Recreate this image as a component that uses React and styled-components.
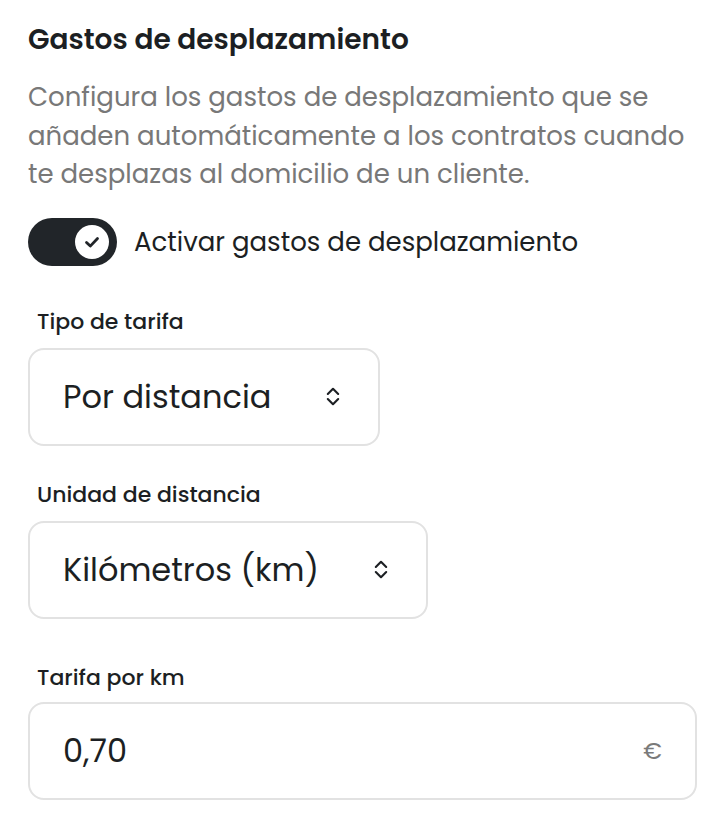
import React from 'react';
import styled, { createGlobalStyle } from 'styled-components';

const GlobalStyle = createGlobalStyle`
    html, body {
        margin: 0;
        padding: 0;
        background: #ffffff;
    }
    body {
        font-family: Poppins, "Open Sans", "Liberation Sans", sans-serif;
        color: #1f2328;
    }
`;

const Page = styled.div`
    display: flex;
    flex-direction: column;
    padding: 22px 29px 20px 28px;
`;

const Title = styled.h2`
    margin: 0;
    font-size: 28px;
    font-weight: 600;
    line-height: 36px;
    color: #1c1f23;
`;

const Description = styled.p`
    margin: 20px 0 0;
    font-size: 26px;
    line-height: 38.5px;
    color: #787878;
`;

const ToggleRow = styled.label`
    display: flex;
    align-items: center;
    gap: 17px;
    margin-top: 24px;
    font-size: 26px;
    line-height: 48px;
    color: #1c1f23;
`;

const Track = styled.span`
    display: flex;
    align-items: center;
    justify-content: ${props => (props.on ? 'flex-end' : 'flex-start')};
    width: 89px;
    height: 48px;
    padding: 0 8px;
    box-sizing: border-box;
    border-radius: 24px;
    background: ${props => (props.on ? '#212529' : '#d0d0d0')};
`;

const Knob = styled.span`
    display: flex;
    align-items: center;
    justify-content: center;
    width: 34px;
    height: 34px;
    border-radius: 50%;
    background: #ffffff;
`;

const Field = styled.div`
    display: flex;
    flex-direction: column;
    align-items: flex-start;
    margin-top: ${props => props.gap || 35}px;
`;

const Label = styled.span`
    padding-left: 9px;
    font-size: 22px;
    font-weight: 500;
    line-height: 28px;
    color: #1c1f23;
`;

const Box = styled.div`
    display: ${props => (props.full ? 'flex' : 'inline-flex')};
    align-self: ${props => (props.full ? 'stretch' : 'flex-start')};
    align-items: center;
    justify-content: space-between;
    gap: 55px;
    height: 98px;
    margin-top: ${props => (props.full ? 10 : 12)}px;
    padding: 0 ${props => (props.full ? 33 : 38)}px 0 33px;
    box-sizing: border-box;
    border: 2px solid #e2e2e2;
    border-radius: 16px;
    background: #ffffff;
`;

const Value = styled.span`
    font-size: 32px;
    color: #1c1f23;
`;

const Suffix = styled.span`
    font-size: 23px;
    color: #7a7a7a;
`;

const Check = () => (
    <svg width="20" height="20" viewBox="0 0 20 20" fill="none">
        <path d="M4.5 10.5l3.8 3.6L15.5 6.5" stroke="#212529" strokeWidth="2.8" strokeLinecap="round" strokeLinejoin="round" />
    </svg>
);

const UpDown = () => (
    <svg width="14" height="21" viewBox="0 0 14 21" fill="none">
        <path d="M1.8 8L7 2.8 12.2 8M1.8 13L7 18.2 12.2 13" stroke="#1c1f23" strokeWidth="2.1" strokeLinecap="round" strokeLinejoin="round" />
    </svg>
);

export default function App() {
    return (
        <Page>
            <GlobalStyle />
            <Title>Gastos de desplazamiento</Title>
            <Description>
                Configura los gastos de desplazamiento que se añaden automáticamente a los contratos cuando te
                desplazas al domicilio de un cliente.
            </Description>
            <ToggleRow>
                <Track on>
                    <Knob>
                        <Check />
                    </Knob>
                </Track>
                Activar gastos de desplazamiento
            </ToggleRow>
            <Field gap={42}>
                <Label>Tipo de tarifa</Label>
                <Box>
                    <Value>Por distancia</Value>
                    <UpDown />
                </Box>
            </Field>
            <Field>
                <Label>Unidad de distancia</Label>
                <Box>
                    <Value>Kilómetros (km)</Value>
                    <UpDown />
                </Box>
            </Field>
            <Field gap={45}>
                <Label>Tarifa por km</Label>
                <Box full>
                    <Value>0,70</Value>
                    <Suffix>€</Suffix>
                </Box>
            </Field>
        </Page>
    );
}
